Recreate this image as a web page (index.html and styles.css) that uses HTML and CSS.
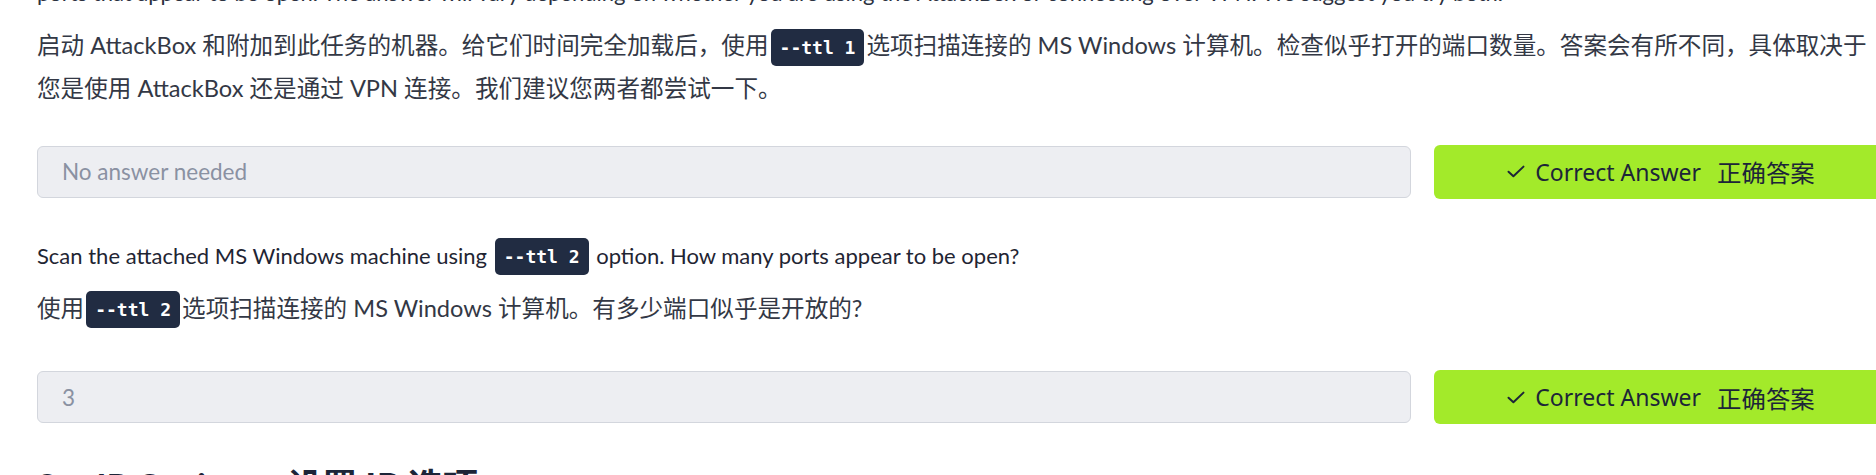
FILE: index.html
```html
<!DOCTYPE html>
<html lang="zh">
<head>
<meta charset="utf-8">
<title>Task</title>
<link rel="stylesheet" href="styles.css">
</head>
<body>
<div class="page">
  <p class="en-prev">ports that appear to be open. The answer will vary depending on whether you are using the AttackBox or connecting over VPN. We suggest you try both.</p>
  <p class="para">启动 AttackBox 和附加到此任务的机器。给它们时间完全加载后，使用<code class="code">--ttl 1</code>选项扫描连接的 MS Windows 计算机。检查似乎打开的端口数量。答案会有所不同，具体取决于您是使用 AttackBox 还是通过 VPN 连接。我们建议您两者都尝试一下。</p>
  <div class="answer-row">
    <div class="answer-input placeholder">No answer needed</div>
    <div class="correct-btn">
      <svg class="check" viewBox="0 0 18 13" width="18" height="13"><path d="M1.5 6.8 L6.4 11.3 L16.5 1.6" fill="none" stroke="#1c2538" stroke-width="2" stroke-linecap="round" stroke-linejoin="round"/></svg>
      <span class="btn-en">Correct Answer</span>
      <span class="btn-cn">正确答案</span>
    </div>
  </div>
  <p class="question">Scan the attached MS Windows machine using <code class="code">--ttl 2</code> option. How many ports appear to be open?</p>
  <p class="question-cn">使用<code class="code">--ttl 2</code>选项扫描连接的 MS Windows 计算机。有多少端口似乎是开放的?</p>
  <div class="answer-row second">
    <div class="answer-input value">3</div>
    <div class="correct-btn">
      <svg class="check" viewBox="0 0 18 13" width="18" height="13"><path d="M1.5 6.8 L6.4 11.3 L16.5 1.6" fill="none" stroke="#1c2538" stroke-width="2" stroke-linecap="round" stroke-linejoin="round"/></svg>
      <span class="btn-en">Correct Answer</span>
      <span class="btn-cn">正确答案</span>
    </div>
  </div>
  <h3 class="heading"><span class="heading-en">Set IP Options</span><span class="heading-cn">设置 IP 选项</span></h3>
</div>
</body>
</html>
```

FILE: styles.css
```css
html, body {
  margin: 0;
  padding: 0;
  overflow: hidden;
  background: #ffffff;
}

body {
  font-family: Lato, "Noto Sans CJK SC", sans-serif;
  color: #2b3140;
}

.page {
  width: 1851px;
  padding-left: 37px;
  margin-top: -22px;
}

.en-prev {
  margin: 0 0 16px;
  font-size: 22px;
  line-height: 30px;
  color: #2b3140;
  white-space: nowrap;
}

.para {
  margin: 0 0 36px;
  padding-right: 13px;
  font-size: 23.6px;
  line-height: 42px;
  color: #333845;
}

.code {
  display: inline-block;
  box-sizing: border-box;
  height: 37px;
  line-height: 37px;
  padding: 0 9px;
  margin: 0 2px;
  vertical-align: middle;
  background: #212c42;
  color: #ffffff;
  border-radius: 5px;
  font-family: "DejaVu Sans Mono", "Liberation Mono", monospace;
  font-weight: bold;
  font-size: 18px;
  position: relative;
  top: -1px;
}

.answer-row {
  display: grid;
  grid-template-columns: 1fr 454px;
  column-gap: 23px;
  align-items: center;
  height: 54px;
  margin-bottom: 36px;
}

.answer-row.second {
  margin-bottom: 39px;
}

.answer-input {
  box-sizing: border-box;
  height: 52px;
  display: flex;
  align-items: center;
  padding-left: 24px;
  background: #edeef2;
  border: 1px solid #d3d6dd;
  border-radius: 6px;
  font-size: 22.5px;
  color: #8a91a2;
}

.correct-btn {
  box-sizing: border-box;
  height: 54px;
  display: flex;
  align-items: center;
  justify-content: center;
  background: #a3ea2a;
  border-radius: 6px;
  color: #1c2538;
}

.check {
  margin-right: 10px;
}

.btn-en {
  font-family: "Noto Sans", "Open Sans", sans-serif;
  font-size: 23px;
}

.btn-cn {
  font-family: "Noto Sans CJK SC", sans-serif;
  font-size: 24.4px;
  margin-left: 16px;
}

.question {
  margin: 0 0 10px;
  font-size: 22px;
  line-height: 42px;
  color: #1f2533;
}

.question-cn {
  margin: 0 0 41px;
  font-size: 23.6px;
  line-height: 42px;
  color: #333845;
}

.heading {
  margin: 0;
  font-size: 35px;
  line-height: 41px;
  font-weight: 700;
  color: #1c2538;
  white-space: nowrap;
}

.heading-en {
  font-family: Lato, sans-serif;
}

.heading-cn {
  font-family: "Noto Sans CJK SC", sans-serif;
  margin-left: 26px;
}
```
